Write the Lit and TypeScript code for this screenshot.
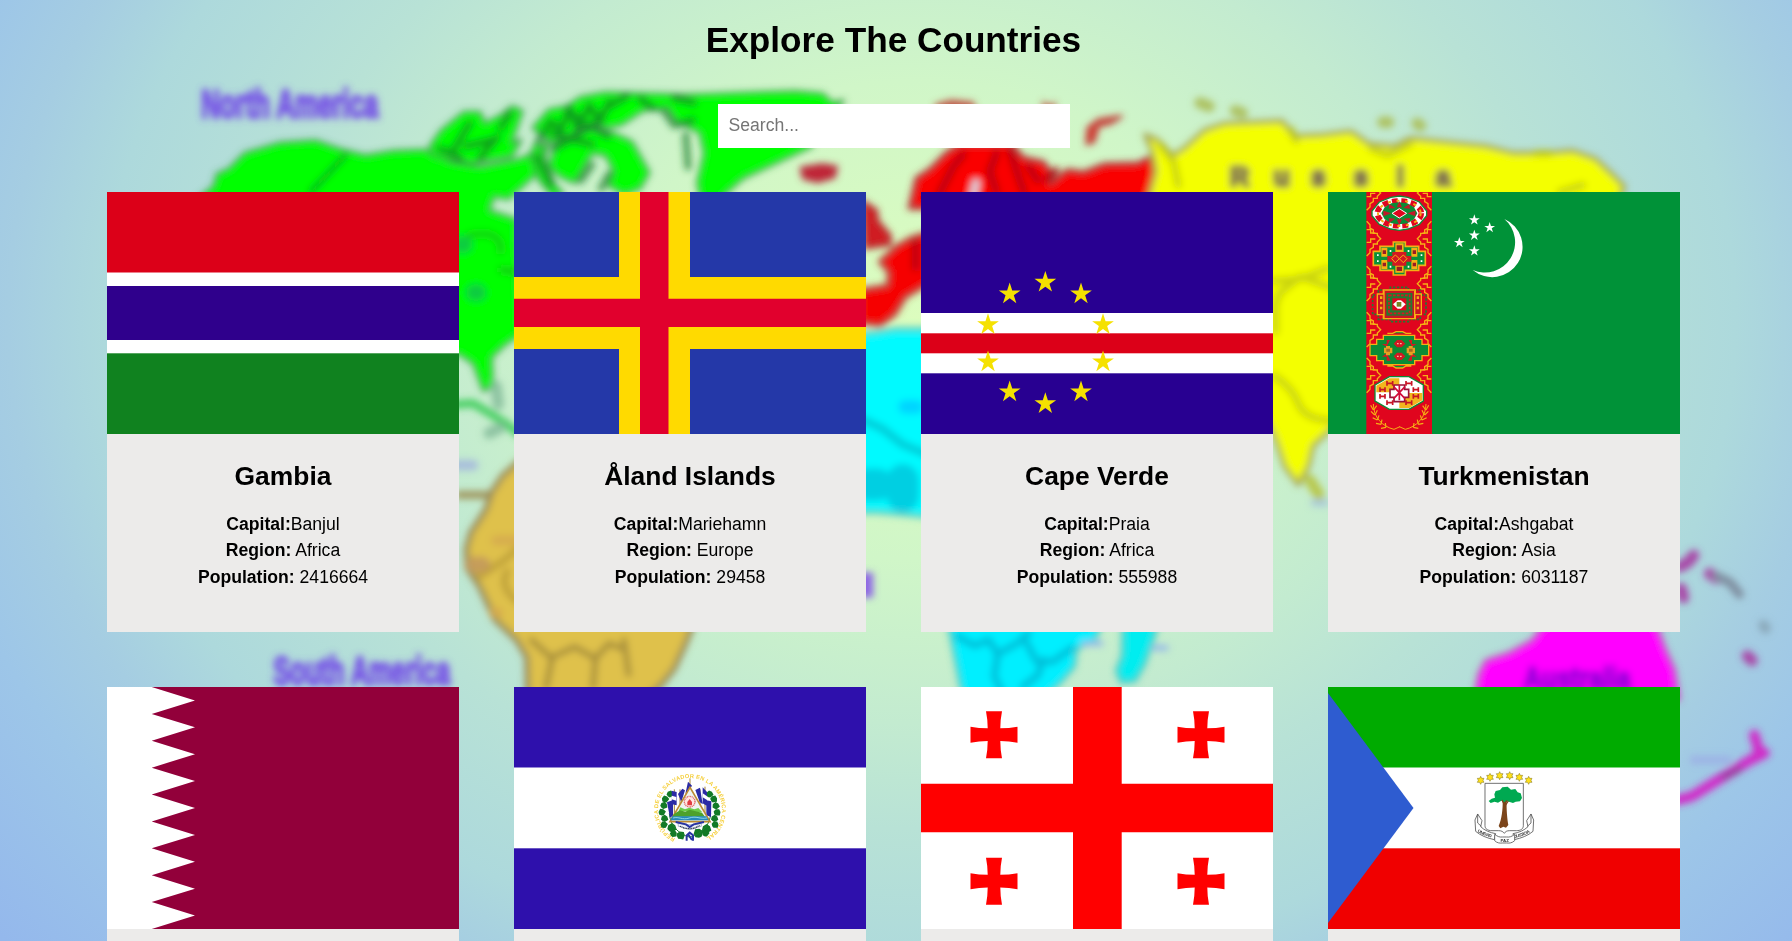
import { LitElement, html, svg, css } from "lit";
import { customElement, property, state } from "lit/decorators.js";

const star = (cx: number, cy: number, r: number, fill: string) => {
  const pts: string[] = [];
  for (let i = 0; i < 10; i++) {
    const rad = i % 2 ? r * 0.382 : r;
    const a = -Math.PI / 2 + (i * Math.PI) / 5;
    pts.push(`${(cx + rad * Math.cos(a)).toFixed(2)},${(cy + rad * Math.sin(a)).toFixed(2)}`);
  }
  return svg`<polygon points=${pts.join(" ")} fill=${fill} />`;
};

const gambia = svg`
  <rect width="352" height="242" fill="#fff"/>
  <rect width="352" height="80.5" fill="#dc0018"/>
  <rect y="94" width="352" height="54" fill="#2f008c"/>
  <rect y="161.3" width="352" height="81" fill="#10821f"/>`;

const aland = svg`
  <rect width="352" height="242" fill="#2438a8"/>
  <path d="M105 0h71v85h176v72H176v85h-71v-85H0V85h105z" fill="#ffda00"/>
  <path d="M126 0h28.500v106.700H352V135H154.500v107H126V135H0v-28.300h126z" fill="#e1002d"/>`;

const capeVerde = svg`
  <rect width="352" height="242" fill="#280091"/>
  <rect y="121" width="352" height="60.300" fill="#fff"/>
  <rect y="141.300" width="352" height="20" fill="#dc0018"/>
  ${[[571, 277], [678, 312], [464, 312], [399, 404], [744, 404], [399, 516], [744, 516], [464, 606], [678, 606], [571, 641]].map(
    ([x, y]) => star(x / 3 - 66, y / 3 - 2, 11.4, "#f5e100")
  )}`;

const corner = (y: number) => svg`
  <g fill="none" stroke="#f5b014" stroke-width="4">
    <path d=${`M122 ${y - 43}l10 10v10l10 6v10h12v6l10 10-10 10v6h-12v10l-10 6v10l-10 10M122 ${y - 18}h12v10h14M122 ${y + 20}h12v-10h14`}/>
    <path d=${`M316 ${y - 43}l-10 10v10l-10 6v10h-12v6l-10 10 10 10v6h12v10l10 6v10l10 10M316 ${y - 18}h-12v10h-14M316 ${y + 20}h-12v-10h-14`}/>
  </g>`;

const spray = svg`
  <g fill="none" stroke="#f5b014" stroke-width="3">
    <path d="M142 642c0 40 28 68 62 76l18-8M300 642c0 40-28 68-62 76l-18-8"/>
    <path stroke-width="3.500" d="M142 660l-8-14M143 660l9-13M146 675l-11-11M147 675l7-14M154 690l-14-7M154 690l5-14M165 703l-15-3M165 703l3-14M180 712l-15 3M180 712l-2-13M300 660l8-14M299 660l-9-13M296 675l11-11M295 675l-7-14M288 690l14-7M288 690l-5-14M277 703l15-3M277 703l-3-14M262 712l15 3M262 712l2-13"/>
  </g>`;

const turkmenistan = svg`
  <rect width="352" height="242" fill="#009238"/>
  <g transform="translate(-2 -2) scale(.33333)">
    <rect x="121" y="0" width="197" height="740" fill="#e0051e"/>
    ${[0, 137, 272, 410, 547].map(corner)}
    <path d="M160 36l34-14 26-4 26 4 34 14 22 27v14l-22 26-34 14-26 4-26-4-34-14-22-26V63z" fill="#fff" stroke="#0c8b35" stroke-width="4"/>
    <ellipse cx="220" cy="70" rx="66" ry="37" fill="none" stroke="#e0051e" stroke-width="17" stroke-dasharray="17 11"/>
    <ellipse cx="220" cy="70" rx="64" ry="38" fill="none" stroke="#f5b014" stroke-width="6" stroke-dasharray="9 17"/>
    <path d="M176 52l20-12 24-3 24 3 20 12 10 18-10 18-20 12-24 3-24-3-20-12-10-18z" fill="#0c8b35"/>
    <path d="M172 62l24 8-24 9zM268 62l-24 8 24 9zM190 42l18 12-20 2zM250 42l-18 12 20 2zM190 98l18-12-20-2zM250 98l-18-12 20-2zM220 34l8 18h-16zM220 106l8-18h-16z" fill="#c01a2a"/>
    <path d="M198 70l22-14 22 14-22 14z" fill="#e0051e" stroke="#fff" stroke-width="3"/>
    <path d="M142 184h20v-15h40v-13h36v13h40v15h20v42h-20v15h-40v14h-36v-14h-40v-15h-20z" fill="#08923a" stroke="#f5b014" stroke-width="5"/>
    <g fill="#f5b014"><path d="M166 173h18v27h-18zM256 173h18v27h-18zM166 210h18v27h-18zM256 210h18v27h-18zM208 160h25v88h-25z"/></g>
    <path d="M184 198h15v-12h42v12h15v17h-15v12h-42v-12h-15z" fill="#d31722"/>
    <path d="M197 206l11-11 12 11 12-11 11 11-11 12-12-12-12 12z" fill="none" stroke="#f5b014" stroke-width="3"/>
    <g fill="#9b1b24"><path d="M212 166h16v13h-16zM212 230h16v13h-16zM170 181h10v11h-10zM260 181h10v11h-10zM170 218h10v11h-10zM260 218h10v11h-10z"/></g>
    <g fill="#fff"><path d="M153 193h5v5h-5zM153 211h5v5h-5zM191 180h5v6h-5zM245 180h5v6h-5zM191 227h5v6h-5zM245 227h5v6h-5zM284 193h5v5h-5zM284 211h5v5h-5z"/></g>
    <g fill="none" stroke="#237b31" stroke-width="5"><path stroke-dasharray="7 5" d="M140 315h17v-15h36v-8h54v8h36v15h17v58h-17v15h-36v7h-54v-7h-36v-15h-17z"/></g>
    <path d="M154 312h18v-12h96v12h18v62h-18v12h-96v-12h-18z" fill="#c91424" stroke="#f5b014" stroke-width="4"/>
    <path d="M174 303v82M266 303v82" stroke="#f5b014" stroke-width="4"/>
    <rect x="181" y="309" width="78" height="68" fill="#237b31"/>
    <rect x="189" y="316" width="62" height="54" fill="none" stroke="#d31722" stroke-width="5" stroke-dasharray="8 4"/>
    <rect x="199" y="325" width="42" height="36" fill="#e0051e"/>
    <path d="M201 343l14-12h10l14 12-14 13h-10z" fill="#fff"/><path d="M212 336h14v14h-14z" fill="#738624"/>
    <path d="M162 319h7v8h-7zM162 335h7v8h-7zM162 350h7v8h-7zM272 319h7v8h-7zM272 335h7v8h-7zM272 350h7v8h-7z" fill="#f5b014"/>
    <path d="M132 463h20v-15h20v-12h94v12h22v15h20v34h-20v15h-22v12h-94v-12h-20v-15h-20zM184 430h16l10-5h20l10 5h16M184 528h16l10 6h20l10-6h16" fill="#0c8b35" stroke="#f5b014" stroke-width="4"/>
    <g fill="#d31722"><path d="M203 461l10-11h14l11 11-11 11h-14zM203 499l10-11h14l11 11-11 11h-14zM168 462h14v-12h10l-10 20zM258 470l-10-20h10v12h14zM168 500h14v12h12l-12-22zM258 490l-12 22h12v-12h14z"/></g>
    <path d="M174 473h25v17h-25zM242 473h25v17h-25zM180 468h12v28h-12zM248 468h12v28h-12z" fill="#e6a221"/>
    <path d="M181 476h11v9h-11zM249 476h11v9h-11z" fill="#a3681f"/><path d="M213 459h5v4h-5zM222 459h5v4h-5zM213 497h5v4h-5zM222 497h5v4h-5z" fill="#f0c0a0"/>
    <path d="M147 585l43-25h59l43 25v48l-43 25h-59l-43-25z" fill="#fff" stroke="#0c8b35" stroke-width="4"/>
    <path d="M151 587l39-22h30v42h-69zM220 609h69v22l-39 23h-30z" fill="#f2b51d"/>
    <path d="M192 598h12v-13h32v13h12v24h-12v13h-32v-13h-12z" fill="#fff" stroke="#9b1238" stroke-width="5"/>
    <path d="M203 590l34 36M237 590l-34 36M220 585v46" stroke="#d10d3b" stroke-width="5"/>
    <g fill="none" stroke="#c91424" stroke-width="5"><path d="M183 573v14M183 580h17M200 573v14M240 573v14M240 580h17M257 573v14M162 592v14M162 599h15M177 592v14M262 592v14M262 599h15M277 592v14M162 612v14M162 619h15M177 612v14M262 612v14M262 619h15M277 612v14M183 631v14M183 638h17M200 631v14M240 631v14M240 638h17M257 631v14"/></g>
    ${spray}
    <path d="M535 87A91 91 0 1 1 440 240A91 91 0 0 0 535 87z" fill="#fff"/>
    ${[[445, 90], [491, 113], [445, 136], [400, 158], [445, 183]].map(([x, y]) => star(x, y, 17, "#fff"))}
  </g>`;

const teeth = () => {
  let d = "M352 0H44.700";
  const step = 242 / 9;
  for (let i = 0; i < 9; i++) d += `L88 ${(i + 0.5) * step}L44.700 ${(i + 1) * step}`;
  return d + "H352z";
};
const qatar = svg`
  <rect width="352" height="242" fill="#fff"/>
  <path d=${teeth()} fill="#92003a"/>`;

const leaf = (x: number, y: number, a: number, r = 11) =>
  svg`<path transform=${`translate(${x} ${y}) rotate(${a})`} d=${`M0 ${-r}L${r * 0.7} ${-r * 0.5}L${r} ${r * 0.4}L${r * 0.5} ${r * 0.7}L0 ${r}L${-r * 0.5} ${r * 0.8}L${-r} ${r * 0.3}L${-r * 0.8} ${-r * 0.5}z`} fill="#127a26"/>`;

const elSalvador = svg`
  <rect width="352" height="242" fill="#2e10ac"/>
  <rect y="80.500" width="352" height="80.800" fill="#fff"/>
  <g transform="translate(116 63) scale(.33333)">
    <path id="motto" d="M135.500 265.200A96 96 0 1 1 224.500 265.200" fill="none"/>
    <text font-family="Liberation Sans, sans-serif" font-size="17" font-weight="700" fill="#f5cf3a" textLength="505" lengthAdjust="spacing"><textPath href="#motto">REPÚBLICA DE EL SALVADOR EN LA AMÉRICA CENTRAL</textPath></text>
    ${[[121, 132, 10], [106, 147, -20], [102, 166, 10], [96, 186, -30], [104, 205, 0], [102, 224, -30], [126, 233, 0, 14], [131, 251, 20, 11], [153, 256, 40, 13],
       [239, 132, -10], [252, 147, 20], [258, 167, -10], [262, 187, 30], [254, 205, 0], [256, 224, 30], [230, 236, 0, 14], [227, 249, -20, 11], [205, 249, -40, 15]].map(
      ([x, y, a, r]) => leaf(x, y, a, r)
    )}
    <path d="M118 190c2 35 24 60 62 72M242 190c-2 35-24 60-62 72" fill="none" stroke="#1c8030" stroke-width="3"/>
    <path d="M180 85v30M133 118v92M225 110v100M150 118v80M210 118v80" stroke="#a4863a" stroke-width="3"/>
    <path d="M174 95l12 12-8 13-12 12zM125 122l15 4v40l-14-3zM218 112l13 14v42l-13-8zM144 132l13-16 8 5-11 35zM196 120l14-7 8 50-9-7zM111 157l18-7v47l-9 6zM229 151l15 3-1 47-14-5z" fill="#2b2ba5"/>
    <path d="M125 137l14 4v11l-14-4zM218 130l13 9v11l-13-8z" fill="#fff"/>
    <path d="M180 112l-60 103h120z" fill="#eef3f2" stroke="#bc8b32" stroke-width="5"/>
    <circle cx="179" cy="155" r="16" fill="#ffe6e2" stroke="#e25e5e" stroke-width="4" stroke-dasharray="3 2"/>
    <path d="M172 166v-10l7-9 7 9v10z" fill="#e13e43"/>
    <path d="M146 183l5-11 14 6 13-5 15 5 12-4 12 13z" fill="#6ccc48"/>
    <path d="M133 191l17-10 16 4 13-6 37 9 9 12H127z" fill="#4da12a"/>
    <path d="M127 199h102l7 12H121z" fill="#2588b8"/><path d="M129 204c18-5 28 7 49 0s31 4 53 0" fill="none" stroke="#8dd7e8" stroke-width="3"/>
    <path d="M145 229c17 0 22 9 35 9s23-8 34-9v-9l-17 4h-34l-19-5z" fill="#eef2f8" stroke="#8a96b4" stroke-width="2"/>
    <path d="M150 229l14 6 16 1 14-2 15-7" fill="none" stroke="#27314a" stroke-width="4" stroke-dasharray="3 2"/>
    <path d="M137 216l31 7 11 8 12-8 31-7M170 272v-16l9-8 10 8v16M174 252l12 18" fill="none" stroke="#2834a3" stroke-width="6"/>
  </g>`;

const bolnisi = (x: number, y: number) =>
  svg`<path transform=${`translate(${x} ${y})`} d="M-8-23.500H8Q6.300-15 6.300-6.500 15-6.500 23.500-8V8Q15 6.300 6.300 6.300 6.300 15 8 23.500H-8Q-6.300 15-6.300 6.300-15 6.300-23.500 8V-8Q-15-6.500-6.300-6.500-6.300-15-8-23.500z" fill="#f00"/>`;
const georgia = svg`
  <rect width="352" height="242" fill="#fff"/>
  <path d="M152 0h48.700v96.700H352v48.600H200.700V242H152v-96.700H0V96.700h152z" fill="#f00"/>
  ${bolnisi(73, 47.7)}${bolnisi(280, 47.7)}${bolnisi(73, 194.3)}${bolnisi(280, 194.3)}`;

const sixStar = (x: number, y: number) =>
  svg`<path transform=${`translate(${x} ${y})`} d="M0-12L3-6 10-6 7 0 10 6 3 6 0 12-3 6-10 6-7 0-10-6-3-6z" fill="#ffe11a" stroke="#776b12" stroke-width="1.500"/>`;
const equatorialGuinea = svg`
  <rect width="352" height="242" fill="#fff"/>
  <rect width="352" height="80.500" fill="#00ab00"/>
  <rect y="161.300" width="352" height="81" fill="#f00000"/>
  <path d="M0 6L85.500 121 0 236z" fill="#2e5cd0"/>
  <g transform="translate(122 63) scale(.33333)">
    ${[[92, 91], [120, 82], [149, 77], [179, 77], [208, 82], [236, 91]].map(([x, y]) => sixStar(x, y))}
    <path d="M105 100h115v127c0 10-8 15-21 15h-20c-9 0-13 3-16 8-4-5-8-8-17-8h-20c-13 0-21-5-21-15z" fill="#fff" stroke="#555" stroke-width="2.500"/>
    <path d="M158 150h12c-1 30 2 57 5 75l-7 8-8-3-9 5-5-7c9-20 13-50 12-78z" fill="#7c451b"/>
    <path d="M116 153l9-7 10-3-2-10 4-10 13-3 7-8 16-2 10 9 13-2 7 10 9 3 4 14-6 10-13 1-8 4-17-5-6 4-12-6-10 6-10-3-12 4z" fill="#00a951"/>
    <path d="M156 150l6 12 9-11M165 168l10-15" fill="none" stroke="#7c451b" stroke-width="4"/>
    <g fill="#fff" stroke="#555" stroke-width="2.500">
      <path d="M83 192l-8 18 2 34c15 13 34 20 56 25l4-18c-17-3-34-10-45-21l4-18zM243 192l8 18-2 34c-15 13-34 20-56 25l-4-18c17-3 34-10 45-21l-4-18z"/>
      <path d="M134 253c9 7 15 9 24 8h12c9 1 15-1 24-8v19c-8 7-15 8-24 7h-12c-9 1-17 0-24-7z"/>
      <path d="M83 192v27l11 10M243 192v27l-11 10" fill="none"/>
    </g>
    <path id="unidad" d="M82 245Q105 260 133 264" fill="none"/><path id="justicia" d="M194 264Q225 258 247 242" fill="none"/>
    <g font-family="Liberation Sans, sans-serif" font-size="13" font-weight="700" fill="#333">
      <text><textPath href="#unidad" textLength="46">UNIDAD</textPath></text>
      <text x="164" y="276" text-anchor="middle">PAZ</text>
      <text><textPath href="#justicia" textLength="50">JUSTICIA</textPath></text>
    </g>
  </g>`;

interface Country {
  name: string;
  capital: string;
  region: string;
  population: number;
  flag: unknown;
}

const COUNTRIES: Country[] = [
  { name: "Gambia", capital: "Banjul", region: "Africa", population: 2416664, flag: gambia },
  { name: "Åland Islands", capital: "Mariehamn", region: "Europe", population: 29458, flag: aland },
  { name: "Cape Verde", capital: "Praia", region: "Africa", population: 555988, flag: capeVerde },
  { name: "Turkmenistan", capital: "Ashgabat", region: "Asia", population: 6031187, flag: turkmenistan },
  { name: "Qatar", capital: "Doha", region: "Asia", population: 2881060, flag: qatar },
  { name: "El Salvador", capital: "San Salvador", region: "Americas", population: 6486201, flag: elSalvador },
  { name: "Georgia", capital: "Tbilisi", region: "Asia", population: 3714000, flag: georgia },
  { name: "Equatorial Guinea", capital: "Malabo", region: "Africa", population: 1402985, flag: equatorialGuinea },
];

@customElement("world-backdrop")
export class WorldBackdrop extends LitElement {
  static styles = css`
    :host { display: block; }
    .map { display: block; width: 100%; height: 100%; }
  `;

  render() {
    return html`<svg class="map" viewBox="0 0 1568 823.400" preserveAspectRatio="none" aria-hidden="true">
      <defs>
        <radialGradient id="sea" gradientUnits="userSpaceOnUse" cx="0" cy="0" r="1" gradientTransform="translate(805 280) scale(1050 840)">
          <stop offset="0" stop-color="#dcfdbe"/><stop offset=".25" stop-color="#d0f6c8"/>
          <stop offset=".42" stop-color="#c3ebd0"/><stop offset=".53" stop-color="#b8e2d6"/>
          <stop offset=".68" stop-color="#add9dc"/><stop offset=".76" stop-color="#a5cde2"/>
          <stop offset=".84" stop-color="#9dc6e8"/><stop offset="1" stop-color="#94b8ec"/>
        </radialGradient>
        <filter id="soft" filterUnits="userSpaceOnUse" x="0" y="0" width="1568" height="824"><feGaussianBlur stdDeviation="3.400"/></filter>
      </defs>
      <rect width="1568" height="824" fill="url(#sea)"/>
      <g filter="url(#soft)" stroke-linejoin="round" stroke-linecap="round">
        <g fill="#00ff00" stroke="#3f9a4c" stroke-width="2.500">
          <path d="M168 178L187 163 190 152 200 148 214 134 228 130 245 125 276 123 296 130 320 136 345 132 372 131 395 142 420 146 455 139 470 132 480 122 476 142 466 155 445 174 432 172 428 184 452 192 455 292 440 303 430 313 431 338 423 342 414 318 402 310 300 300 200 200z"/>
          <path d="M376 128l10-14 20-16 14 0 4 10 14-7 10-8 9 4-6 18-4 10 9-3-8 15-18 3-16 3-16-2-20-5z"/>
          <path d="M466 112l14-16 16-3 12-8 22-4 70 2 60-2 36-1 24 2 8 8 10-2-6 9-12 3-10 28-30 14-30 14-16 14-8 12-12-4-4-18 6-26-4-18-20-10-8-12-22 3-18 12-14 3-6-2-17 3-12 8-12 4z"/>
          <path d="M480 146l8-24 28-9 20 3 17 8 9 16 6 11-8 14-14 5-14-8 5-12-7-14-12-2-7 12-8 14-12-5z"/>
          <path d="M470 122l7 17 8 22 8 9-9 2-13-15-7-21z"/>
        </g>
        <g fill="none" stroke="#187d2c" stroke-width="6" opacity=".72">
          <path d="M302 136L272 168" stroke-width="4"/>
          <path d="M395 134l16-26M408 128l24-6M420 138l15-18M438 112l8-12M472 122l10-16 9 8 7-20 7 18 11-20 9 15 8-18M484 117l14 4 19-10 15 8M500 98l16 14 14-16M535 92l14-8M580 96l10 14 16-5M560 87l13 8M590 86l17 4M470 137l12 24M484 130l16-8 18 4M518 144l-10 14M533 152l-7 13M600 118l2 28M385 130l18 8"/>
          <path d="M410 206q30-6 28 14" stroke="#22b71c" stroke-width="5"/><path d="M439 236l13 2" stroke="#22b71c"/>
        </g>
        <path d="M403 214h3M415 256h3" stroke="#0cc050" stroke-width="15" opacity=".8"/>
        <g fill="none" stroke="#45cf60" stroke-width="7"><path d="M398 354l16-1 15 9 14 9 10 8"/><path d="M434 338l2 16M428 379l10-5" stroke="#7fb997" stroke-width="10" opacity=".8"/></g>
        <path d="M402 433h28" stroke="#a09860" stroke-width="7" fill="none"/><path d="M400 407h14" stroke="#a8bedb" stroke-width="9"/>

        <path d="M455 403L440 416 430 431 425 446 412 466 408 480 409 497 420 514 433 542 452 560 461 575 462 615 H560L578 600 590 585 600 563 605 550 570 450z" fill="#dfc14b" stroke="#9b8c58" stroke-width="5"/>
        <g fill="none" stroke="#c0a23a" stroke-width="6"><path d="M453 480l-13 11-20 13M444 500q-8 12 8 26" /></g>
        <g fill="none" stroke="#a8903c" stroke-width="5"><path d="M465 560l18 16-5 25M483 575l20-9 18 10 12-13 10 4M521 576l-2 25M546 560l4 30"/></g>
        <path d="M414 494h8" stroke="#c49a5c" stroke-width="14" opacity=".9"/><path d="M434 473h18M432 536h4" stroke="#d6a94f" stroke-width="9" opacity=".8"/>

        <path d="M701 147l18-3 13 2-2 9-14 4-13-3z" fill="#c02436" stroke="#b8404c" stroke-width="3"/>
        <path d="M796 182l6-26 12-8 14-14 12-8 45 0 10 12 18 4 8 11-2 8 15-12 14 2 18-7 30-1 12-6 6 45z" fill="#fa0206" stroke="#b03a3a" stroke-width="4"/>
        <path d="M818 91l14-4 20 2 4 12-30 3-8-4zM912 88l6 4 6-3-1 12-11 0z" fill="#c05848"/>
        <path d="M755 176l12 8 1 9 11 13 0 8-22 3z" fill="#d01c20" stroke="#b03a3a" stroke-width="3"/>
        <path d="M812 204l-14 4-14 8-14 13 8 9-1 12-25 4v28l18 3 13-10 9-15 20-12z" fill="#f60206" stroke="#b8403a" stroke-width="4"/>
        <path d="M951 126l1-14 9-7 20-3-10 6-10 2-4 14z" fill="#d73d35" stroke="#c0443e" stroke-width="3"/>
        <g stroke="#a8000c" stroke-width="6" fill="none" opacity=".85"><path d="M822 170l12-24 9-11M872 168l-6-18 6-16M884 132l6 19 6 17M900 146l8 12M916 157l8-8M801 212v22"/></g>
        <path d="M854 160l-3 14" stroke="#dccdd8" stroke-width="7"/>

        <path d="M1003 180L1011 150 1008 132 1002 118 1012 122 1026 136 1036 130 1054 114 1072 108 1122 106 1132 119 1158 118 1182 115 1198 126 1220 128 1234 121 1262 124 1300 128 1324 134 1352 134 1376 132 1396 139 1410 152 1421 163 1414 182 1240 260 1200 340 1162 378 1149 390 1145 408 1136 424 1124 408 1116 384 1100 350 1060 240z" fill="#f4ff00" stroke="#a8a854" stroke-width="4"/>
        <g fill="none" stroke="#b6c014" stroke-width="6"><path d="M1016 127l11 15 4 20M1130 113l4 10M1200 130l14 6 20-10M1344 134l12 0M1365 168l20-6M1116 290V266l4-10 18-14 28 10M1114 246l24-2 24-9M1115 329q16 10 21 24t29 15" opacity=".7"/></g>
        <path d="M1146 420l8 13" stroke="#b8c850" stroke-width="10"/><path d="M1150 440h10" stroke="#a8c8dc" stroke-width="6"/>
        <g fill="none" stroke="#adc264" stroke-width="10"><path d="M1050 90l8 3M1081 97l6 2M1210 107l5 0M1240 108l3 2"/></g>
        <g font-family="Liberation Sans, sans-serif" font-size="24" font-weight="700" fill="#857850" stroke="#857850" stroke-width="3">
          <text x="1076" y="163">R</text><text x="1114" y="163">u</text><text x="1147" y="163">s</text><text x="1184" y="163">s</text><text x="1222" y="163">i</text><text x="1256" y="163">a</text>
        </g>

        <path d="M740 294l25-3 18-3 30 0v164l-45-4-30 0z" fill="#00faff" stroke="#55d0c6" stroke-width="4"/>
        <path d="M750 365l22 10 18 14 22 9" fill="none" stroke="#00ccd8" stroke-width="7"/>
        <path d="M760 424h8M790 420v14" stroke="#00b4d0" stroke-width="28" opacity=".6"/>
        <path d="M792 356h10" stroke="#00d4ff" stroke-width="12"/>
        <path d="M828 535h140l-10 25-16 8-2 15-12 14-20 18h-63l-5-17z" fill="#00efff" stroke="#48c8c0" stroke-width="3"/>
        <path d="M983 540h31l-5 20-8 22-8 14-12 1-4-10 5-13z" fill="#00edf0" stroke="#48c8c0" stroke-width="3"/>
        <path d="M838 557l15 8 12-5 8 12 17-9 10-9M873 572l-3 20 6 12M898 562l9 17 14 0 17-12M895 601l13-10 5-14" fill="none" stroke="#00b4d0" stroke-width="6" opacity=".8"/>
        <path d="M948 563h15M1010 567h10" stroke="#95b9e8" stroke-width="5"/>
        <path d="M750 512h14" stroke="#8e66e4" stroke-width="22" stroke-linecap="butt"/>

        <path d="M1290 612l4-22 6-12 21-7 20-11 10-14h98l8 22 8 18 4 26z" fill="#ff00ff" stroke="#c050b8" stroke-width="3"/>
        <g fill="none" stroke="#b83cae" stroke-width="7">
          <path d="M1468 700l12-3 37-23 24-15M1535 643l4 14 5 2-12 6" stroke="#d02cc8" stroke-width="9"/>
          <path d="M1470 496l7-4 5-6M1471 515l2 8M1496 502l6 4M1529 574l4 4" stroke="#a848a8" stroke-width="10"/>
          <path d="M1502 504l12 6 8 10" stroke="#7f8fa0" stroke-width="8"/><path d="M1543 547l2 3" stroke="#8aa8ba" stroke-width="9"/>
          <path d="M1482 665h30" stroke="#9cb2e5"/>
          <path d="M1508 680l14-7" stroke="#903c94" stroke-width="5"/>
        </g>
        <g font-family="Liberation Sans, sans-serif" font-weight="700" fill="#7450e6">
          <text x="176" y="103" font-size="35" textLength="155" lengthAdjust="spacingAndGlyphs" stroke="#7450e6" stroke-width="2">North America</text>
          <text x="239" y="599" font-size="36" textLength="155" lengthAdjust="spacingAndGlyphs" stroke="#7450e6" stroke-width="2">South America</text>
          <text x="1333" y="603" font-size="27" textLength="94" lengthAdjust="spacingAndGlyphs" fill="#8a00d8" stroke="#8a00d8" stroke-width="1.500">Australia</text>
        </g>
      </g>
    </svg>`;
  }
}

@customElement("country-card")
export class CountryCard extends LitElement {
  @property({ attribute: false }) country!: Country;

  static styles = css`
    :host { display: block; height: 440px; background: #ecebea; text-align: center; }
    .flag { display: block; width: 352px; height: 242px; }
    .info { padding-top: 23px; }
    .name { margin: 0 0 14.200px; font-size: 26.400px; line-height: 39.600px; font-weight: 700; }
    .row { margin: 0; font-size: 17.600px; line-height: 26.400px; }
  `;

  render() {
    const c = this.country;
    return html`
      <svg class="flag" viewBox="0 0 352 242" role="img" aria-label=${c.name}>${c.flag}</svg>
      <div class="info">
        <h2 class="name">${c.name}</h2>
        <p class="row"><b>Capital:</b>${c.capital}</p>
        <p class="row"><b>Region:</b> ${c.region}</p>
        <p class="row"><b>Population:</b> ${c.population}</p>
      </div>`;
  }
}

@customElement("app-root")
export class AppRoot extends LitElement {
  @state() private query = "";

  static styles = css`
    :host {
      display: block; position: relative; height: 100vh; overflow: hidden; color: #000;
      font-family: "Liberation Sans", Arial, sans-serif;
    }
    .backdrop { position: absolute; inset: 0; }
    .page {
      position: relative; box-sizing: border-box; height: 100%; overflow-y: auto; scrollbar-width: none;
      padding: 14.400px 112px 0 107px;
      display: flex; flex-direction: column; align-items: center;
    }
    .page > * { flex-shrink: 0; }
    .title { margin: 0; font-size: 35.200px; line-height: 52.800px; font-weight: 700; }
    .search {
      box-sizing: border-box; width: 352px; height: 44px; margin: 36.800px 0 44px; padding: 0 11px;
      border: 0; border-radius: 0; outline: 0; background: #fff; font: 17.600px "Liberation Sans", Arial, sans-serif;
    }
    .search::placeholder { color: #757575; }
    .grid { display: grid; grid-template-columns: repeat(4, 352px); gap: 55px; }
  `;

  render() {
    const q = this.query.toLowerCase();
    return html`
      <world-backdrop class="backdrop"></world-backdrop>
      <main class="page">
        <h1 class="title">Explore The Countries</h1>
        <input class="search" type="text" placeholder="Search..." .value=${this.query}
          @input=${(e: Event) => (this.query = (e.target as HTMLInputElement).value)} />
        <section class="grid">
          ${COUNTRIES.filter((c) => c.name.toLowerCase().includes(q)).map(
            (c) => html`<country-card .country=${c}></country-card>`
          )}
        </section>
      </main>`;
  }
}
